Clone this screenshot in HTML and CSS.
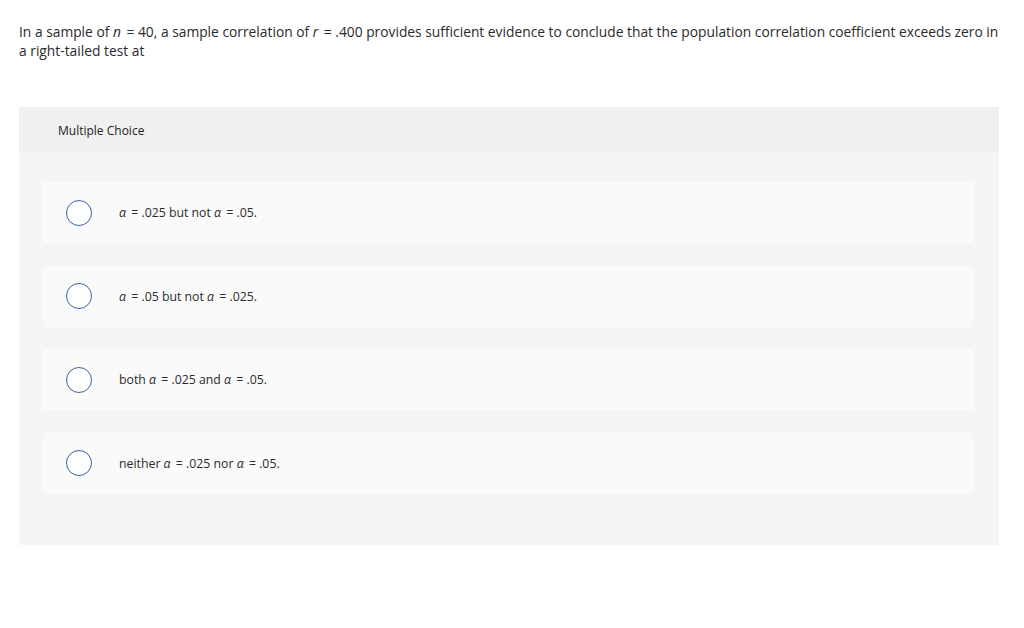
FILE: index.html
```html
<!DOCTYPE html>
<html>
<head>
<meta charset="utf-8">
<link rel="stylesheet" href="styles.css">
</head>
<body>
<p class="prompt">In a sample of <i class="var">n</i> = 40, a sample correlation of <i class="var">r</i> = .400 provides sufficient evidence to conclude that the population correlation coefficient exceeds zero in a right-tailed test at</p>
<div class="panel">
  <div class="panel-head">Multiple Choice</div>
  <div class="panel-body">
    <div class="option"><span class="radio"></span><span class="label"><i class="var">α</i> = .025 but not <i class="var">α</i> = .05.</span></div>
    <div class="option"><span class="radio"></span><span class="label"><i class="var">α</i> = .05 but not <i class="var">α</i> = .025.</span></div>
    <div class="option"><span class="radio"></span><span class="label">both <i class="var">α</i> = .025 and <i class="var">α</i> = .05.</span></div>
    <div class="option"><span class="radio"></span><span class="label">neither <i class="var">α</i> = .025 nor <i class="var">α</i> = .05.</span></div>
  </div>
</div>
</body>
</html>
```
FILE: styles.css
```css
body {
  margin: 0;
  padding: 22px 25px 0 19px;
  font-family: "Open Sans", "Liberation Sans", sans-serif;
  color: #2b2b2b;
  background: #fff;
}
.prompt {
  margin: 0;
  font-size: 13.8px;
  line-height: 19px;
}
.var {
  font-style: italic;
  margin-right: 2px;
}
.panel {
  margin-top: 47px;
  background: #f5f5f5;
  border-radius: 2px;
}
.panel-head {
  height: 46px;
  background: #f0f0f0;
  padding-left: 39px;
  display: flex;
  align-items: center;
  font-size: 12px;
  color: #222;
}
.panel-body {
  padding: 29px 26px 51px 24px;
  display: flex;
  flex-direction: column;
  gap: 22.6px;
}
.option {
  height: 61px;
  background: #fafafa;
  border-radius: 2px;
  display: flex;
  align-items: center;
  padding-left: 23px;
}
.radio {
  width: 24px;
  height: 24px;
  border: 1.3px solid #3a64a0;
  border-radius: 50%;
  background: #fff;
  flex: none;
}
.label {
  margin-left: 27px;
  font-size: 12.3px;
  color: #2b2b2b;
}
```
